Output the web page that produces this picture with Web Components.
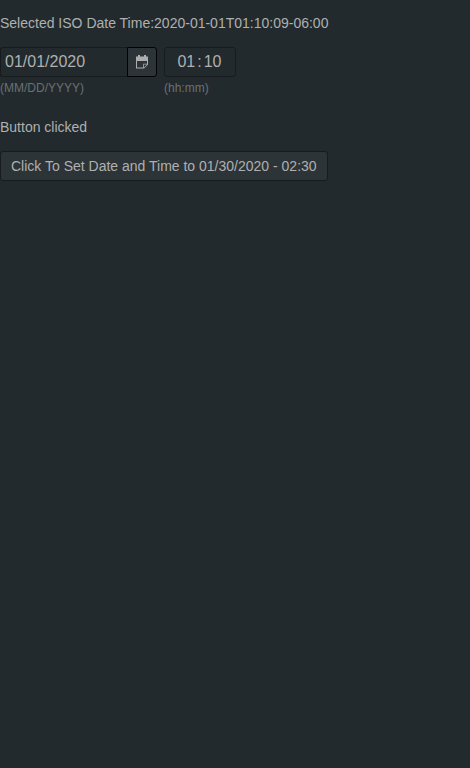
<!DOCTYPE html>
<html lang="en"><head><meta charset="utf-8"><title>Date and time</title>
<style>html,body{margin:0;height:100%;background:#222a2d}</style></head><body>
<date-time-page></date-time-page>
<script>
const define=(name,html)=>customElements.define(name,class extends HTMLElement{constructor(){super();this.attachShadow({mode:'open'}).innerHTML=html;}});
define('status-text',`<style>:host{display:block;font-size:14px;line-height:20px}</style><slot></slot>`);
define('hint-text',`<style>:host{display:block;font-size:12px;line-height:16px;color:#6c7072;margin-top:3px}</style><slot></slot>`);
define('date-field',`<style>:host{display:block;width:157px}.box{display:flex}.v{box-sizing:border-box;width:127px;height:30px;border:1px solid #171b1d;border-right:0;border-radius:3px 0 0 3px;padding-left:4px;font-size:16px;line-height:28px}.b{display:flex;box-sizing:border-box;align-items:center;justify-content:center;width:30px;height:30px;border:1px solid #020303;border-radius:0 3px 3px 0;background:#2d3437}svg{display:block}</style>
<div class="box"><span class="v"><slot></slot></span><span class="b"><svg width="12" height="14" viewBox="0 0 12 14"><path fill="#adadad" fill-rule="evenodd" d="M0 1.5h2V0h2v1.5h4V0h2v1.5h2V9.5L8 13.5H0zM1 6v6.5h6.2V8.8H11V6z"/><path d="M8 9.6h3L8 12.6z" fill="#2d3437"/></svg></span></div><hint-text>(MM/DD/YYYY)</hint-text>`);
define('time-field',`<style>:host{display:block;width:72px}.box{display:flex;justify-content:center;box-sizing:border-box;height:30px;border:1px solid #171b1d;border-radius:3px;font-size:16px;line-height:28px;gap:2px;padding-right:1px}</style>
<div class="box"><slot name="h"></slot><span>:</span><slot name="m"></slot></div><hint-text>(hh:mm)</hint-text>`);
define('action-button',`<style>:host{display:block}button{display:block;box-sizing:border-box;width:328px;height:30px;margin:0;padding:0 0 0 10px;text-align:left;border:1px solid #171b1d;border-radius:3px;background:#2d3437;color:inherit;font:14px/28px "Liberation Sans",Arial,sans-serif}</style><button><slot></slot></button>`);
define('date-time-page',`<style>:host{display:block;padding-top:13px;font-family:"Liberation Sans",Arial,sans-serif;color:#aeb0b1}.f{display:flex;gap:7px;margin-top:14px}.c{margin-top:21px}action-button{margin-top:14px}</style>
<status-text>Selected ISO Date Time:<span>2020-01-01T01:10:09-06:00</span></status-text><div class="f"><date-field>01/01/2020</date-field><time-field><span slot="h">01</span><span slot="m">10</span></time-field></div><status-text class="c">Button clicked</status-text><action-button>Click To Set Date and Time to 01/30/2020 - 02:30</action-button>`);
</script></body></html>
